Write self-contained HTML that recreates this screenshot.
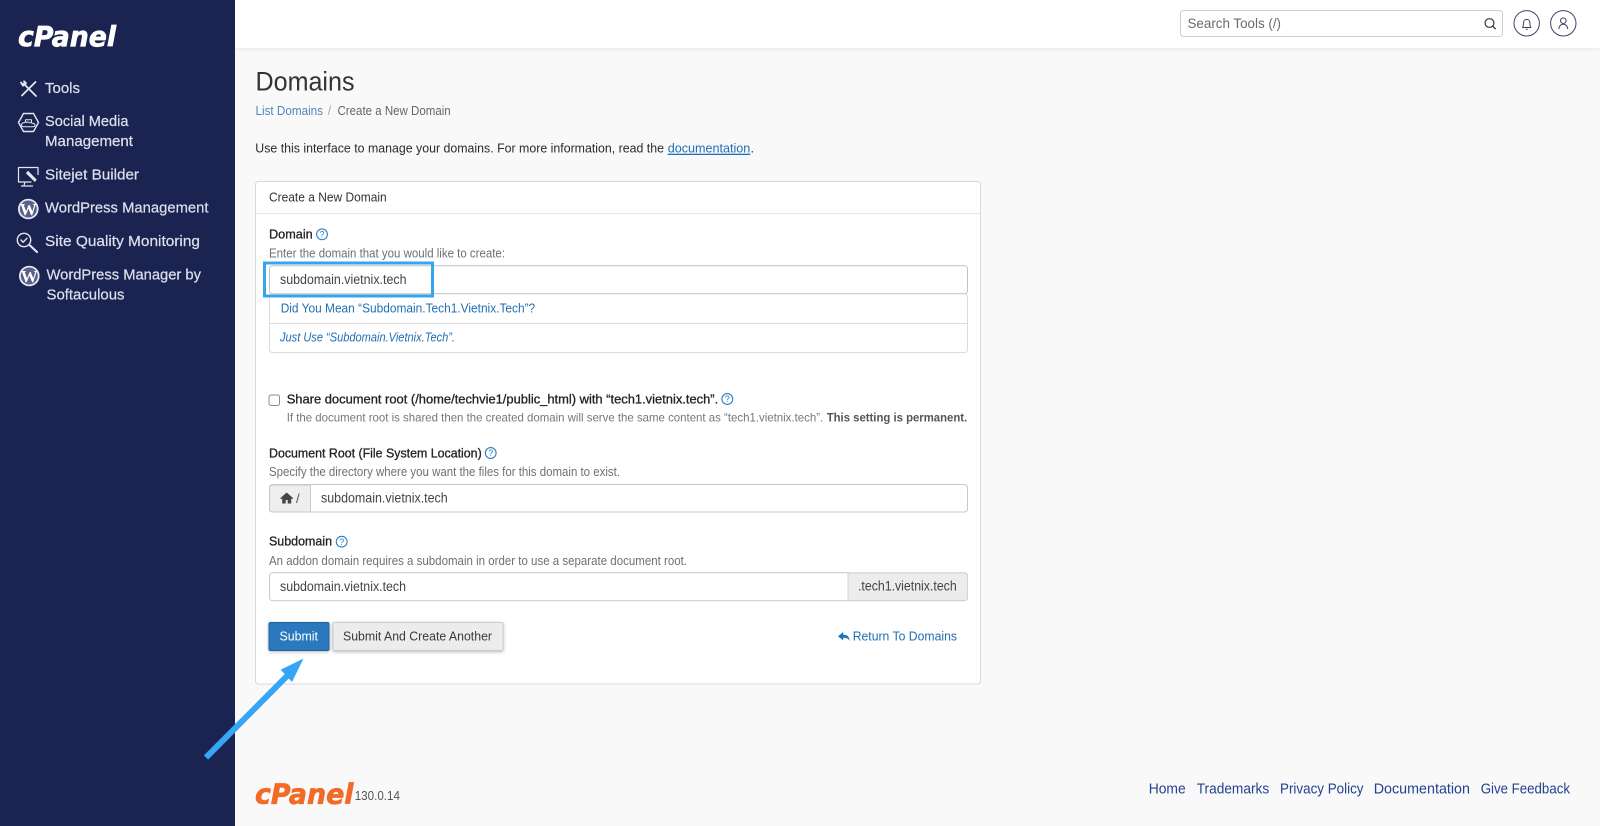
<!DOCTYPE html>
<html lang="en"><head><meta charset="utf-8"><title>Domains - cPanel</title>
<style>
html,body{margin:0;padding:0;width:1600px;height:826px;overflow:hidden;background:#f9f9fa}
svg{display:block}
text{font-family:"Liberation Sans","DejaVu Sans",sans-serif;font-size:13px;fill:#333}
.nav{font-size:14.5px;fill:#dde0ec;stroke:#dde0ec;stroke-width:.2px}
.lbl{fill:#222;stroke:#222;stroke-width:.3px}
.hint{fill:#707070;font-size:12.5px}
.val{fill:#444;font-size:13.5px}
.lnk{fill:#1f6fb5}
.foot{fill:#23428f;font-size:14.5px}
.help circle{fill:none;stroke:#2f7fc4;stroke-width:1.1}
.help text{fill:#2f7fc4;font-size:9px;text-anchor:middle}
.logo{font-family:"DejaVu Sans","Liberation Sans",sans-serif;font-weight:bold;font-style:italic;font-size:28px}
.ic{fill:none;stroke:#e4e6f0;stroke-width:1.4;stroke-linecap:round;stroke-linejoin:round}
.wp{font-family:"Liberation Serif",serif;font-weight:bold;font-size:17px;fill:#fff}
</style></head><body>
<svg width="1600" height="826" viewBox="0 0 1600 826" xmlns="http://www.w3.org/2000/svg">
<defs>
<filter id="s" x="-5%" y="-20%" width="110%" height="160%"><feDropShadow dx="0" dy="1" stdDeviation="1.5" flood-color="#000" flood-opacity=".28"/></filter>
<filter id="h" x="-5%" y="-20%" width="110%" height="160%"><feDropShadow dx="0" dy="1" stdDeviation="2" flood-color="#000" flood-opacity=".07"/></filter>
</defs>
<rect width="1600" height="826" fill="#f9f9fa"/>
<!-- header -->
<rect x="235" width="1365" height="48" fill="#fff" filter="url(#h)"/>
<rect x="1180.500" y="10.500" width="322" height="26" rx="3" fill="#fff" stroke="#cfcfd3"/>
<text x="1187.500" y="28" textLength="93.500" lengthAdjust="spacingAndGlyphs" style="font-size:14px;fill:#6a6a6a">Search Tools (/)</text>
<circle cx="1489.500" cy="23" r="4.400" fill="none" stroke="#444" stroke-width="1.300"/><path d="M1492.800 26.300l2.500 2.500" stroke="#444" stroke-width="1.400" stroke-linecap="round"/>
<circle cx="1526.700" cy="23.300" r="12.700" fill="#fff" stroke="#3d4463"/>
<path d="M1522.500 27.500c1-1.200 1-2.200 1-4.500 0-2.200 1.400-3.600 3.200-3.600s3.200 1.400 3.200 3.600c0 2.300 0 3.300 1 4.500zM1525.700 29.300h2" fill="none" stroke="#3d4463" stroke-width="1" stroke-linejoin="round"/>
<circle cx="1563.300" cy="23.300" r="12.700" fill="#fff" stroke="#3d4463"/>
<circle cx="1563.300" cy="20.700" r="2.800" fill="none" stroke="#3d4463" stroke-width="1"/><path d="M1558.800 29c.4-3 2-4.700 4.500-4.700s4.100 1.700 4.500 4.700" fill="none" stroke="#3d4463" stroke-width="1"/>
<!-- sidebar -->
<rect width="235" height="826" fill="#1b2350"/>
<text x="18" y="46" class="logo" textLength="98" lengthAdjust="spacingAndGlyphs" style="fill:#fff;stroke:#fff;stroke-width:.7px">cPanel</text>
<path class="ic" style="stroke-width:1.800" d="M23.500 83.500L36 96M35.500 82L22 95.500M21 82.500l2 3.200 3-2.400-2-2"/>
<path class="ic" d="M23.500 113.500h10l5 9-5 9h-10l-5-9z"/>
<path class="ic" style="stroke-width:1" d="M21.500 125c0-1.600 1.200-2.500 2.600-2.200.8-1 1.800-1 2.500-.3.800-.7 2-.7 2.800.3 1.500-.5 2.600.2 3 .6 1.400-.3 2.600.5 2.600 1.600s-1 1.800-2.500 1.800H23.500c-1.200 0-2-.6-2-1.800zM25.500 122v-2.200h6v2.200"/>
<path class="ic" style="stroke-width:1.200" d="M31 182H18.500v-14.500h19.500v7M25 182l-1 3.500M21.500 186h11"/>
<path d="M28 170.800l8.700 8.800-1.800 2.400-9-8.800z" fill="#e4e6f0"/>
<text x="45" y="93" class="nav" textLength="35" lengthAdjust="spacingAndGlyphs">Tools</text>
<text x="45" y="126" class="nav" textLength="83.500" lengthAdjust="spacingAndGlyphs">Social Media</text>
<text x="45" y="146" class="nav" textLength="88" lengthAdjust="spacingAndGlyphs">Management</text>
<text x="45" y="179.300" class="nav" textLength="94" lengthAdjust="spacingAndGlyphs">Sitejet Builder</text>
<circle cx="28.300" cy="209" r="10.300" fill="#e6e8f0"/><circle cx="28.300" cy="209" r="8.500" fill="#5a6087"/><text x="28.300" y="214.800" text-anchor="middle" class="wp">W</text>
<text x="45" y="212.700" class="nav" textLength="163.500" lengthAdjust="spacingAndGlyphs">WordPress Management</text>
<circle cx="24" cy="240" r="6.700" class="ic"/><path class="ic" d="M21 240l2.200 2.200 3.800-4"/><path d="M30 245.500l7 6.500" stroke="#e4e6f0" stroke-width="2.200" stroke-linecap="round"/>
<text x="45" y="246" class="nav" textLength="155" lengthAdjust="spacingAndGlyphs">Site Quality Monitoring</text>
<circle cx="29.300" cy="276" r="10.300" fill="#e6e8f0"/><circle cx="29.300" cy="276" r="8.500" fill="#5a6087"/><text x="29.300" y="281.800" text-anchor="middle" class="wp">W</text>
<text x="46.500" y="279.300" class="nav" textLength="154.500" lengthAdjust="spacingAndGlyphs">WordPress Manager by</text>
<text x="46.500" y="299.300" class="nav" textLength="78" lengthAdjust="spacingAndGlyphs">Softaculous</text>
<!-- page head -->
<text x="255.500" y="90.700" textLength="99" lengthAdjust="spacingAndGlyphs" style="font-size:27px;fill:#333">Domains</text>
<text x="255.500" y="115" textLength="67.500" lengthAdjust="spacingAndGlyphs" style="font-size:12.500px;fill:#4f86bd">List Domains</text>
<text x="327.800" y="115" style="font-size:12.500px;fill:#aaa">/</text>
<text x="337.500" y="115" textLength="113.200" lengthAdjust="spacingAndGlyphs" style="font-size:12.500px;fill:#666">Create a New Domain</text>
<text x="255.300" y="152.700" textLength="408.700" lengthAdjust="spacingAndGlyphs" style="fill:#2b2b2b">Use this interface to manage your domains. For more information, read the</text>
<text x="667.700" y="152.700" textLength="82.600" lengthAdjust="spacingAndGlyphs" text-decoration="underline" class="lnk">documentation</text>
<text x="750.500" y="152.700">.</text>
<!-- card -->
<rect x="255.500" y="181.500" width="725" height="502.500" rx="3" fill="#fff" stroke="#d9d9dc"/>
<path d="M256 213.500h724" stroke="#e6e6e8"/>
<text x="269" y="201.700" textLength="117.700" lengthAdjust="spacingAndGlyphs">Create a New Domain</text>
<text x="269" y="238.300" class="lbl" textLength="43.700" lengthAdjust="spacingAndGlyphs">Domain</text>
<g class="help"><circle cx="322" cy="234.300" r="5.400"/><text x="322" y="237.500">?</text></g>
<text x="269" y="257.300" class="hint" textLength="236" lengthAdjust="spacingAndGlyphs">Enter the domain that you would like to create:</text>
<rect x="269.500" y="293.500" width="698" height="59" rx="3" fill="#fff" stroke="#dcdcdf"/>
<path d="M270 323.500h697" stroke="#dcdcdf"/>
<rect x="269.500" y="265.700" width="698" height="28" rx="3" fill="#fff" stroke="#c2c2c6"/>
<rect x="264.500" y="263" width="168" height="33" fill="none" stroke="#36a5f0" stroke-width="3"/>
<text x="280" y="284" class="val" textLength="126.500" lengthAdjust="spacingAndGlyphs">subdomain.vietnix.tech</text>
<text x="280.700" y="312.300" class="lnk" textLength="254.500" lengthAdjust="spacingAndGlyphs">Did You Mean “Subdomain.Tech1.Vietnix.Tech”?</text>
<text x="280" y="341.700" class="lnk" font-style="italic" textLength="175" lengthAdjust="spacingAndGlyphs">Just Use “Subdomain.Vietnix.Tech”.</text>
<rect x="269" y="395" width="10.500" height="10.500" rx="2" fill="#fff" stroke="#8e8e92"/>
<text x="286.700" y="403.300" class="lbl" textLength="431.500" lengthAdjust="spacingAndGlyphs">Share document root (/home/techvie1/public_html) with “tech1.vietnix.tech”.</text>
<g class="help"><circle cx="727.300" cy="399" r="5.400"/><text x="727.300" y="402.200">?</text></g>
<text x="286.700" y="421.300" class="hint" textLength="536.500" lengthAdjust="spacingAndGlyphs" style="font-size:12px;fill:#777">If the document root is shared then the created domain will serve the same content as “tech1.vietnix.tech”.</text>
<text x="826.700" y="421.300" font-weight="bold" textLength="140.500" lengthAdjust="spacingAndGlyphs" style="font-size:12px;fill:#555">This setting is permanent.</text>
<text x="269" y="457.300" class="lbl" textLength="212.700" lengthAdjust="spacingAndGlyphs">Document Root (File System Location)</text>
<g class="help"><circle cx="490.700" cy="453" r="5.400"/><text x="490.700" y="456.200">?</text></g>
<text x="269" y="476" class="hint" textLength="351" lengthAdjust="spacingAndGlyphs">Specify the directory where you want the files for this domain to exist.</text>
<rect x="269.500" y="484.500" width="698" height="27.500" rx="3" fill="#fff" stroke="#c8c8cc"/>
<path d="M310.500 485H272.500a3 3 0 0 0-3 3V509a3 3 0 0 0 3 3H310.500z" fill="#eee" stroke="#c8c8cc"/>
<path d="M286.700 492.500l-6.500 5.700 1 1 1-.8v5.100h3.500v-3.500h2v3.500h3.500v-5.100l1 .8 1-1z" fill="#444"/>
<text x="296" y="503" style="fill:#555">/</text>
<text x="321" y="502.700" class="val" textLength="126.700" lengthAdjust="spacingAndGlyphs">subdomain.vietnix.tech</text>
<text x="269" y="545.700" class="lbl" textLength="63" lengthAdjust="spacingAndGlyphs">Subdomain</text>
<g class="help"><circle cx="341.700" cy="541.700" r="5.400"/><text x="341.700" y="544.900">?</text></g>
<text x="269" y="565" class="hint" textLength="418" lengthAdjust="spacingAndGlyphs">An addon domain requires a subdomain in order to use a separate document root.</text>
<rect x="269.500" y="572.700" width="698" height="28" rx="3" fill="#fff" stroke="#c8c8cc"/>
<path d="M848 573H964.500a3 3 0 0 1 3 3V597.500a3 3 0 0 1-3 3H848z" fill="#ececec" stroke="#d4d4d8"/>
<text x="280" y="591" class="val" textLength="126" lengthAdjust="spacingAndGlyphs">subdomain.vietnix.tech</text>
<text x="858" y="590.700" textLength="98.700" lengthAdjust="spacingAndGlyphs" class="val">.tech1.vietnix.tech</text>
<!-- buttons -->
<rect x="269" y="622.500" width="60" height="28" rx="1.500" fill="#2a79bf" stroke="#22639f" filter="url(#s)"/>
<text x="279.500" y="640.700" textLength="38.500" lengthAdjust="spacingAndGlyphs" style="fill:#fff">Submit</text>
<rect x="333" y="622.500" width="170" height="28" rx="1.500" fill="#ececec" stroke="#ccc" filter="url(#s)"/>
<text x="343" y="640.700" textLength="149" lengthAdjust="spacingAndGlyphs" style="fill:#3a3a3a">Submit And Create Another</text>
<path d="M838 636.300l5.200-4.300v2.600c4 0 6.300 2 6.300 6.400-1.100-2.300-3-3.200-6.300-3.200v2.700z" fill="#2275bd"/>
<text x="852.700" y="640.700" class="lnk" textLength="104.300" lengthAdjust="spacingAndGlyphs">Return To Domains</text>
<!-- arrow -->
<path d="M206 757.500L287 676" stroke="#36a5f5" stroke-width="6"/>
<path d="M303.500 658.500L280.700 669.700 292 682z" fill="#36a5f5"/>
<!-- footer -->
<text x="255" y="803.500" class="logo" textLength="98.500" lengthAdjust="spacingAndGlyphs" style="fill:#f26a25;stroke:#f26a25;stroke-width:.7px">cPanel</text>
<text x="354.700" y="800" textLength="45.300" lengthAdjust="spacingAndGlyphs" style="fill:#555">130.0.14</text>
<text x="1148.700" y="793.300" class="foot" textLength="37" lengthAdjust="spacingAndGlyphs">Home</text>
<text x="1196.700" y="793.300" class="foot" textLength="72.500" lengthAdjust="spacingAndGlyphs">Trademarks</text>
<text x="1280" y="793.300" class="foot" textLength="83.500" lengthAdjust="spacingAndGlyphs">Privacy Policy</text>
<text x="1373.700" y="793.300" class="foot" textLength="96.300" lengthAdjust="spacingAndGlyphs">Documentation</text>
<text x="1480.700" y="793.300" class="foot" textLength="89.300" lengthAdjust="spacingAndGlyphs">Give Feedback</text>
</svg>
</body></html>
